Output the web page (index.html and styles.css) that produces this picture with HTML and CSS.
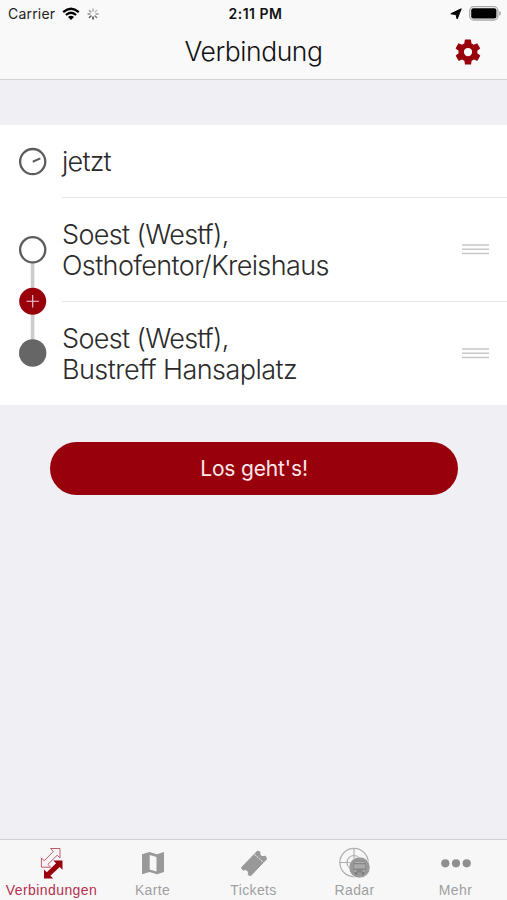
FILE: index.html
```html
<!DOCTYPE html>
<html lang="de">
<head>
<meta charset="utf-8">
<title>Verbindung</title>
<link rel="stylesheet" href="styles.css">
</head>
<body>
<div class="app">
  <header class="header">
    <div class="status">
      <div class="status-left">
        <span class="carrier">Carrier</span>
        <svg class="wifi" width="18" height="14" viewBox="0 0 18 14"><g fill="none" stroke="#000" stroke-width="2.3"><path d="M1.2 5.1Q9-1.7 16.8 5.1"/><path d="M3.9 8Q9 3.6 14.1 8"/></g><path d="M6 9.900Q9 7.600 12 9.900L9 13Z"/></svg>
        <svg class="spinner" width="12" height="12" viewBox="-6 -6 12 12"><g stroke-width="1.400" stroke-linecap="round"><path d="M0-3V-5" stroke="#aaa"/><path d="M2.100-2.100L3.600-3.600" stroke="#bbb"/><path d="M3 0H5" stroke="#999"/><path d="M2.100 2.100L3.600 3.600" stroke="#777"/><path d="M0 3V5" stroke="#333"/><path d="M-2.100 2.100L-3.600 3.600" stroke="#555"/><path d="M-3 0H-5" stroke="#888"/><path d="M-2.100-2.100L-3.600-3.600" stroke="#999"/></g></svg>
      </div>
      <span class="time">2:11 PM</span>
      <div class="status-right">
        <svg width="12" height="12" viewBox="0 0 12 12"><path stroke="#000" stroke-width="1" stroke-linejoin="round" d="M11.200.8L7.200 11L5.900 6.500L.8 5.800Z"/></svg>
        <svg width="32" height="15" viewBox="0 0 32 15"><rect x=".7" y=".7" width="28.200" height="13.300" rx="4" fill="#f9f9f9" stroke="#aaa" stroke-width="1.300"/><rect x="2.200" y="2.200" width="25.200" height="10.300" rx="2"/><path d="M30.100 5Q32 5.400 32 7.400T30.100 9.800Z" fill="#aaa"/></svg>
      </div>
    </div>
    <div class="navbar">
      <h1 class="title">Verbindung</h1>
      <svg class="gear" width="30" height="30" viewBox="0 0 24 24"><path fill="#98000c" d="M19.400 13c0-.3.1-.6.1-1s0-.7-.1-1l2.100-1.600c.2-.2.2-.4.1-.6l-2-3.500c-.1-.2-.4-.3-.6-.2l-2.500 1c-.5-.4-1.100-.7-1.700-1l-.4-2.600c0-.3-.2-.5-.5-.5h-4c-.3 0-.5.200-.5.500l-.4 2.600c-.6.300-1.200.600-1.700 1l-2.500-1c-.2-.1-.5 0-.6.200l-2 3.500c-.1.200-.1.500.1.600L4.500 11c0 .3-.1.700-.1 1s0 .7.1 1l-2.100 1.600c-.2.200-.2.400-.1.600l2 3.500c.1.200.4.300.6.200l2.500-1c.5.400 1.100.700 1.700 1l.4 2.600c0 .3.200.5.500.5h4c.3 0 .5-.2.500-.5l.4-2.600c.6-.3 1.200-.6 1.700-1l2.500 1c.2.100.5 0 .6-.2l2-3.500c.1-.2.1-.5-.1-.6ZM12 15.300a3.300 3.300 0 1 1 0-6.600a3.300 3.300 0 0 1 0 6.600Z"/></svg>
    </div>
  </header>

  <main class="content">
    <section class="form">
      <svg class="route" width="62" height="279" viewBox="0 0 62 279">
        <path d="M32.600 138V215" stroke="#ccc" stroke-width="3.600"/>
        <g fill="#fff" stroke="#5c5c5c" stroke-width="2.300"><circle cx="32.700" cy="36.600" r="12.600"/><circle cx="32.700" cy="124.800" r="12.600"/></g>
        <path d="M32.800 36.800L40.300 33.400" stroke="#5c5c5c" stroke-width="2.100"/>
        <circle cx="32.700" cy="176.300" r="13.500" fill="#98000c"/>
        <path d="M26.500 176.300H39M32.700 170V182.600" stroke="#edcfd2" stroke-width="1.100"/>
        <circle cx="32.700" cy="228" r="13.700" fill="#666"/>
      </svg>
      <div class="rows">
        <div class="row row-time"><span class="place"><span class="now">jetzt</span></span></div>
        <div class="row">
          <span class="place"><span class="city">Soest (Westf),</span><span class="from">Osthofentor/Kreishaus</span></span>
          <svg class="handle" width="27" height="12" viewBox="0 0 27 12"><path d="M0 2H27M0 6.200H27M0 10.400H27" stroke="#c6c6c6" stroke-width="1.500"/></svg>
        </div>
        <div class="row">
          <span class="place"><span class="city">Soest (Westf),</span><span class="to">Bustreff Hansaplatz</span></span>
          <svg class="handle" width="27" height="12" viewBox="0 0 27 12"><path d="M0 2H27M0 6.200H27M0 10.400H27" stroke="#c6c6c6" stroke-width="1.500"/></svg>
        </div>
      </div>
    </section>
    <button class="submit">Los geht's!</button>
  </main>

  <nav class="tabs">
    <a class="tab active">
      <svg width="34" height="34" viewBox="0 0 34 34"><path d="M15.800 1.300H25.300V10.800L22.500 8L13.100 17.200L16 20H6.700V10.800L9.500 13.600L18.700 4.200Z" transform="translate(-.3 .2)" fill="#f9f4f6" stroke="#bd5c6c" stroke-width="1"/><path d="M18.300 13.500H27.500V22.700L24.700 19.900L15.400 28.700L18.300 31.600H9V22.400L11.800 25.200L21.100 16.300Z" fill="#98000c"/></svg>
      <span class="label-wide">Verbindungen</span>
    </a>
    <a class="tab">
      <svg width="34" height="34" viewBox="0 0 34 34"><path fill="#999" fill-rule="evenodd" d="M6 7.200L13.500 5L21 7.300L28 5V25L21 27.200L13.500 25L6 27.200ZM13.700 8V22.500L20.500 24.500V10Z"/></svg>
      <span>Karte</span>
    </a>
    <a class="tab">
      <svg width="34" height="34" viewBox="0 0 34 34"><path fill="#999" stroke="#999" stroke-width="1" stroke-linejoin="round" d="M4.500 20.500L20.500 4L23 5.100C22 8.500 25.200 10.800 28.300 9L29.600 12L14 28.500L11.100 27.800C12.500 24.500 9.500 21.500 6 23.200Z"/><path d="M17.400 7.200L26.500 15.500" stroke="#f7f7f8" stroke-width="1" stroke-dasharray="2 1"/></svg>
      <span>Tickets</span>
    </a>
    <a class="tab">
      <svg width="34" height="34" viewBox="0 0 34 34"><g fill="none" stroke="#b0b0b0" stroke-width="1.200"><circle cx="16" cy="15.500" r="14.200"/><circle cx="16" cy="15.500" r="7"/><path d="M1.800 15.500H30.200M16 1.300V29.700"/></g><circle cx="21.500" cy="20.500" r="10.600" fill="#999" stroke="#f7f7f8" stroke-width=".7"/><rect x="15.500" y="14.500" width="12" height="11" rx="1.500" fill="#858585"/><path d="M16.500 15.500H26.500" stroke="#b5b5b5"/><rect x="16.200" y="17.300" width="10.700" height="4.200" fill="#aaa"/><path d="M16 24H18.500M24.500 24H27" stroke="#ccc"/><path d="M17 26.500H19M24 26.500H26" stroke="#777" stroke-width="2"/></svg>
      <span>Radar</span>
    </a>
    <a class="tab">
      <svg width="34" height="34" viewBox="0 0 34 34"><g fill="#8f8f8f"><circle cx="6.300" cy="16.300" r="4.100"/><circle cx="17" cy="16.300" r="4.100"/><circle cx="27.700" cy="16.300" r="4.100"/></g></svg>
      <span>Mehr</span>
    </a>
  </nav>
</div>
</body>
</html>
```
FILE: styles.css
```css
* { box-sizing: border-box; }
body { margin: 0; font-family: Inter, "Liberation Sans", sans-serif; }
svg { display: block; flex: none; }
.app { width: 507px; height: 900px; display: flex; flex-direction: column; background: #efeff4; overflow: hidden; }
.header { height: 80px; flex: none; background: #f9f9f9; border-bottom: 1px solid #d4d4d7; }
.status { height: 27px; display: grid; grid-template-columns: 1fr auto 1fr; align-items: center; padding: 0 6px 0 8px; color: #111; }
.status-left, .status-right { display: flex; align-items: center; }
.carrier { font-size: 14px; letter-spacing: .2px; color: #222; }
.wifi { margin-left: 7px; }
.spinner { margin-left: 7px; }
.time { font-size: 14px; font-weight: 600; letter-spacing: .5px; margin-left: 2px; }
.status-right { justify-content: flex-end; gap: 7px; }
.navbar { height: 50px; display: grid; grid-template-columns: 1fr auto 1fr; align-items: center; padding: 0 24px; }
.title { grid-column: 2; margin: 0; padding-bottom: 3px; font-size: 26.5px; font-weight: 300; line-height: 30px; letter-spacing: -.45px; color: #111; }
.gear { justify-self: end; }
.content { flex: 1; padding-top: 45px; }
.form { height: 280px; display: grid; grid-template-columns: 62px 1fr; background: #fff; }
.rows { display: flex; flex-direction: column; }
.row { height: 103.5px; display: flex; align-items: center; justify-content: space-between; padding-right: 18px; border-bottom: 1px solid #e5e5e8; }
.row:last-child { border-bottom: 0; }
.row-time { height: 73px; }
.place { display: flex; flex-direction: column; align-items: flex-start; padding-top: 3px; font-size: 27px; line-height: 30.5px; font-weight: 300; color: #2b2b2b; white-space: nowrap; }
.now { letter-spacing: -.8px; }
.city { letter-spacing: -.65px; }
.from { letter-spacing: -.62px; }
.to { letter-spacing: -.53px; }
.submit { display: block; width: 408px; height: 53px; margin: 37px 0 0 50px; padding: 0; border: 0; border-radius: 27px; background: #98000c; color: #fbe9ea; font-family: inherit; font-size: 21px; font-weight: 400; letter-spacing: -.15px; }
.tabs { height: 61px; flex: none; display: grid; grid-template-columns: repeat(5, 101px); padding-left: 1px; background: #f7f7f8; border-top: 1px solid #d1d1d6; }
.tab { display: flex; flex-direction: column; align-items: center; padding-top: 7px; font-family: "Liberation Sans", sans-serif; font-size: 14px; letter-spacing: .35px; color: #a0a0a0; }
.tab span { line-height: 18px; white-space: nowrap; }
.tab .label-wide { letter-spacing: .42px; }
.tab.active { color: #b5304a; }
```
